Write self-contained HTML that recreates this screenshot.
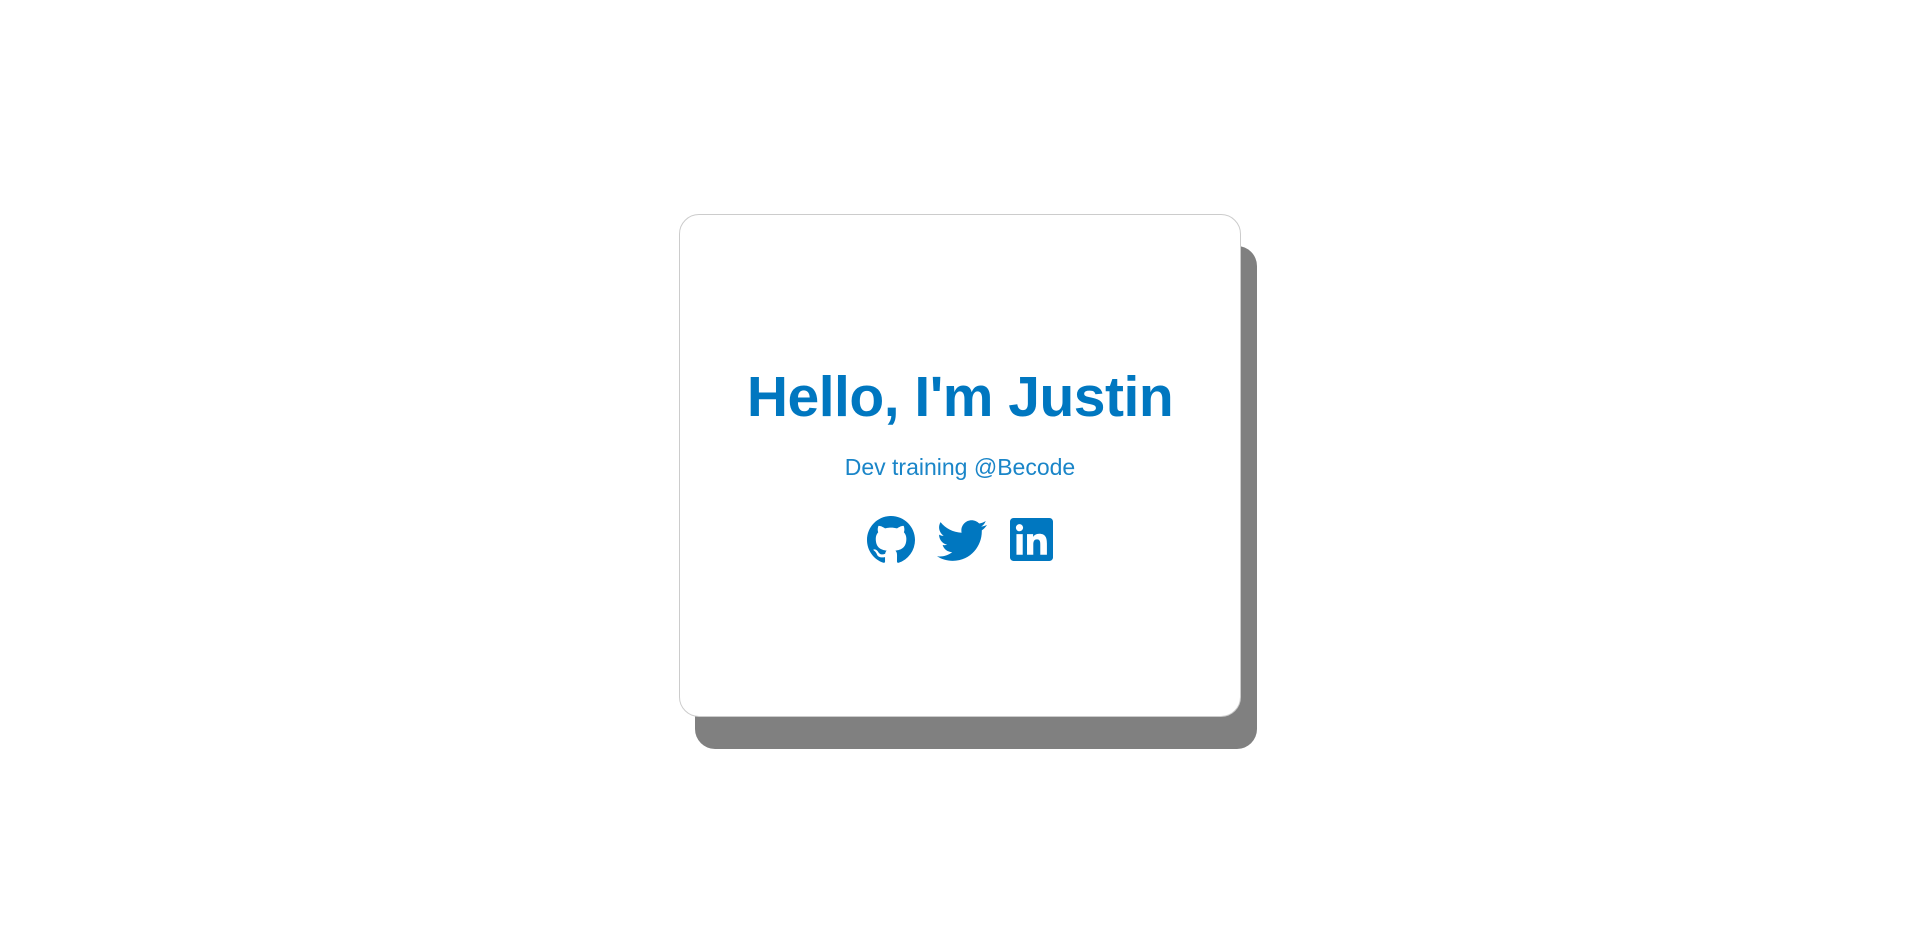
<!DOCTYPE html>
<html><head><meta charset="utf-8"><style>
html,body{margin:0;width:1920px;height:931px;background:#fff;overflow:hidden;font-family:"Liberation Sans",sans-serif}
.card{position:absolute;left:679px;top:214px;width:562px;height:503px;border:1px solid #ccc;border-radius:20px;background:#fff;box-shadow:16px 32px 0 #808080;box-sizing:border-box}
h1{position:absolute;left:0;right:0;top:361px;margin:0;text-align:center;color:#0077c0;font-weight:bold;font-size:57px;line-height:72px;letter-spacing:-0.5px}
.sub{position:absolute;left:0;right:0;top:452px;text-align:center;color:#1a85c8;font-size:23px;line-height:30px;font-weight:300}
svg{position:absolute;fill:#0077c0}
</style></head><body>
<div class="card"></div>
<h1>Hello, I'm Justin</h1>
<div class="sub">Dev training @Becode</div>
<svg style="left:867px;top:516px" width="48" height="48" viewBox="0 0 16 16"><path d="M8 0C3.58 0 0 3.58 0 8c0 3.540 2.29 6.53 5.47 7.59.4.07.55-.17.55-.38 0-.19-.01-.82-.01-1.49-2.01.37-2.530-.49-2.690-.94-.09-.23-.48-.94-.82-1.13-.28-.15-.68-.52-.01-.53.63-.01 1.08.58 1.23.82.72 1.21 1.870.87 2.33.66.07-.52.28-.87.51-1.07-1.78-.2-3.64-.89-3.64-3.95 0-.87.31-1.59.82-2.15-.08-.2-.36-1.02.08-2.12 0 0 .67-.21 2.2.82.64-.18 1.32-.27 2-.27.68 0 1.36.09 2 .27 1.53-1.04 2.2-.82 2.2-.82.44 1.1.16 1.92.08 2.12.51.56.82 1.27.82 2.15 0 3.07-1.87 3.75-3.65 3.95.29.25.54.73.54 1.48 0 1.07-.01 1.93-.01 2.2 0 .21.15.46.55.38A8.013 8.013 0 0016 8c0-4.42-3.58-8-8-8z"/></svg>
<svg style="left:937px;top:518px" width="50" height="44" viewBox="0 0 24 21"><path d="M24 3.3c-.9.4-1.8.6-2.8.8 1-.6 1.8-1.6 2.2-2.7-1 .6-2 1-3.1 1.2C19.3 1.6 18 1 16.6 1c-2.7 0-4.9 2.2-4.9 4.9 0 .4 0 .8.1 1.1C7.7 6.8 4.1 4.9 1.7 1.9c-.4.7-.7 1.6-.7 2.5 0 1.7.9 3.2 2.2 4.1-.8 0-1.6-.2-2.2-.6v.1c0 2.4 1.7 4.4 3.9 4.800-.4.1-.8.2-1.3.2-.3 0-.6 0-.9-.1.6 2 2.4 3.4 4.6 3.4-1.7 1.3-3.8 2.1-6.1 2.1-.4 0-.8 0-1.2-.1 2.2 1.4 4.8 2.2 7.5 2.2 9.1 0 14-7.5 14-14v-.6c1-.7 1.8-1.6 2.5-2.6z"/></svg>
<svg style="left:1010px;top:518px" width="43" height="43" viewBox="0 0 24 24"><path d="M22 0H2C.9 0 0 .9 0 2v20c0 1.1.9 2 2 2h20c1.1 0 2-.9 2-2V2c0-1.1-.9-2-2-2zM7.1 20.5H3.6V9h3.5v11.5zM5.3 7.4c-1.1 0-2-.9-2-2s.9-2 2-2 2 .9 2 2-.9 2-2 2zm15.2 13.1h-3.6v-5.6c0-1.3 0-3-1.8-3s-2.1 1.4-2.1 2.9v5.7H9.5V9h3.4v1.6c.5-.9 1.6-1.8 3.4-1.8 3.6 0 4.3 2.4 4.3 5.5v6.2z"/></svg>
</body></html>
